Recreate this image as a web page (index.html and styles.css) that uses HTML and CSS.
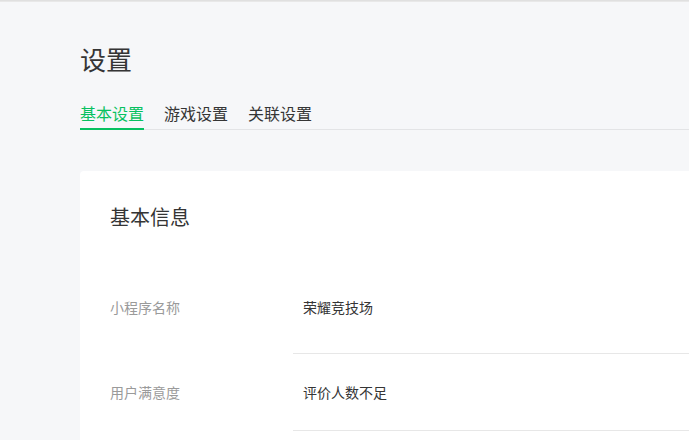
FILE: index.html
```html
<!DOCTYPE html>
<html lang="zh-CN">
<head>
<meta charset="utf-8">
<title>设置</title>
<link rel="stylesheet" href="styles.css">
</head>
<body>
<div class="topline"></div>
<main class="page">
  <h1 class="title">设置</h1>
  <nav class="tabs">
    <a class="tab tab-active">基本设置</a>
    <a class="tab">游戏设置</a>
    <a class="tab">关联设置</a>
  </nav>
  <section class="card">
    <h2 class="card-title">基本信息</h2>
    <div class="info">
      <div class="row row-first">
        <div class="label">小程序名称</div>
        <div class="value">荣耀竞技场</div>
      </div>
      <div class="row">
        <div class="label">用户满意度</div>
        <div class="value">评价人数不足</div>
      </div>
    </div>
  </section>
</main>
</body>
</html>
```

FILE: styles.css
```css
html, body {
  margin: 0;
  padding: 0;
  background: #f6f7f9;
  font-family: "Noto Sans CJK SC", "Noto Sans", sans-serif;
  color: #353535;
}
.topline {
  height: 2px;
  background: linear-gradient(#dcdcdc, #ececec);
}
.page {
  padding: 0 0 0 80px;
}
.title {
  margin: 39px 0 0;
  font-size: 26px;
  line-height: 36px;
  font-weight: 400;
}
.tabs {
  display: flex;
  gap: 20px;
  margin-top: 25px;
  border-bottom: 1px solid #e3e4e6;
}
.tab {
  font-size: 16px;
  line-height: 22px;
  padding-bottom: 4px;
  border-bottom: 2px solid transparent;
  margin-bottom: -1px;
  color: #353535;
  cursor: pointer;
}
.tab-active {
  color: #07c160;
  border-bottom-color: #07c160;
}
.card {
  margin-top: 41px;
  background: #fff;
  border-radius: 4px 0 0 0;
  padding: 32px 0 9px 30px;
}
.card-title {
  margin: 0;
  font-size: 20px;
  line-height: 28px;
  font-weight: 400;
}
.info {
  margin-top: 39px;
}
.row {
  display: grid;
  grid-template-columns: 183px 1fr;
  font-size: 14px;
  line-height: 22px;
}
.label {
  color: #9a9a9a;
  padding: 27px 0;
}
.value {
  padding: 27px 0 27px 10px;
  border-bottom: 1px solid #e7e7e7;
}
.row-first .label,
.row-first .value {
  padding-top: 26px;
  padding-bottom: 35px;
}
```
